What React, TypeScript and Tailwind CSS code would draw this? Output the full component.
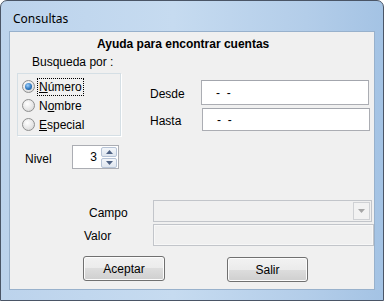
import { ReactNode } from "react";

const font = "font-['Liberation_Sans',Arial,sans-serif]";

const Radio = ({ checked, children }: { checked?: boolean; children: ReactNode }) => (
  <div className="flex h-[19px] items-center pl-[4px]">
    <span className="flex h-[13px] w-[13px] items-center justify-center rounded-full border border-[#8e8f8f] bg-[radial-gradient(circle_at_40%_35%,#ffffff,#e4e4e4_60%,#cfcfcf)]">
      {checked && (
        <span className="h-[7px] w-[7px] rounded-full bg-[radial-gradient(circle_at_40%_35%,#9fd2ff,#2f78bf_55%,#174a80)]" />
      )}
    </span>
    <span className="ml-[4px] text-[12px] leading-[14px] text-black">{children}</span>
  </div>
);

const TextBox = ({ h = "h-[24px]", children }: { h?: string; children?: ReactNode }) => (
  <div
    className={`flex w-[168px] ${h} items-center border border-[#abadb3] border-t-[#a3a6ad] bg-white pl-[14px] text-[12px] text-black`}
  >
    {children}
  </div>
);

const Button = ({ label, w }: { label: string; w: string }) => (
  <div
    className={`flex ${w} h-[25px] items-center justify-center rounded-[3px] border border-[#707070] bg-[linear-gradient(#f2f2f2,#ebebeb_50%,#dddddd_50%,#cfcfcf)] text-[12px] text-black shadow-[inset_0_0_0_1px_#fcfcfc]`}
  >
    {label}
  </div>
);

export default function App() {
  return (
    <div className={`h-[301px] w-[384px] bg-white ${font}`}>
      <div className="flex h-[301px] w-[384px] flex-col overflow-hidden rounded-t-[7px] border border-[#4a5566] bg-[linear-gradient(90deg,#bcd3ec,#c6dbf0_45%,#b3cde9_80%,#a4c3e4)]">
        {/* title bar */}
        <div className="flex h-[30px] shrink-0 items-center pl-[12px] pt-[6px] font-['Noto_Sans',sans-serif] text-[12px] text-black">
          Consultas
        </div>
        <div className="flex flex-1">
          <div className="w-[8px] shrink-0" />
          {/* client */}
          <div className="flex h-[259px] w-[366px] flex-col border border-[#98b1cc] bg-[#f0f0f0] text-[12px] leading-[14px] text-black">
            <div className="mt-[5px] pl-[87px] font-bold">Ayuda para encontrar cuentas</div>

            <div className="flex">
              <div className="flex w-[140px] flex-col pt-[4px]">
                <div className="pl-[22px]">Busqueda por :</div>
                <div className="ml-[7px] mt-[4px] h-[63px] w-[104px] border border-[#d5dfe5] pt-[3px] shadow-[1px_1px_0_#ffffff]">
                  <Radio checked>
                    <span className="outline-1 outline-dotted outline-black outline-offset-[1px]">
                      <span className="underline">N</span>úmero
                    </span>
                  </Radio>
                  <Radio>
                    N<span className="underline">o</span>mbre
                  </Radio>
                  <Radio>
                    <span className="underline">E</span>special
                  </Radio>
                </div>
                <div className="mt-[9px] flex items-center">
                  <span className="w-[62px] pl-[15px] pt-[4px]">Nivel</span>
                  <div className="flex h-[24px] w-[47px] items-center border border-[#abadb3] bg-white">
                    <span className="flex-1 pr-[4px] text-right">3</span>
                    <div className="mr-[1px] flex w-[16px] flex-col gap-[1px]">
                      <div className="flex h-[10px] items-center justify-center rounded-[2px] border border-[#b6c3d6] bg-[linear-gradient(#f3f6fa,#dfe6ef)]">
                        <svg width="7" height="4" viewBox="0 0 7 4">
                          <path d="M0 4 L3.5 0 L7 4 Z" fill="#4e6284" />
                        </svg>
                      </div>
                      <div className="flex h-[10px] items-center justify-center rounded-[2px] border border-[#b6c3d6] bg-[linear-gradient(#f3f6fa,#dfe6ef)]">
                        <svg width="7" height="4" viewBox="0 0 7 4">
                          <path d="M0 0 L3.5 4 L7 0 Z" fill="#4e6284" />
                        </svg>
                      </div>
                    </div>
                  </div>
                </div>
              </div>

              <div className="flex flex-col gap-[3px] pt-[29px]">
                <div className="flex items-center">
                  <span className="w-[51px] pt-[3px]">Desde</span>
                  <TextBox h="h-[25px]">-&nbsp;&nbsp;-</TextBox>
                </div>
                <div className="flex items-center">
                  <span className="w-[52px] pt-[3px]">Hasta</span>
                  <TextBox h="h-[23px]">-&nbsp;&nbsp;-</TextBox>
                </div>
              </div>
            </div>

            <div className="mt-[31px] flex flex-col gap-[2px]">
              <div className="flex items-center">
                <span className="w-[143px] pl-[79px] pt-[4px]">Campo</span>
                <div className="flex h-[22px] w-[219px] justify-end border border-[#c2c5ca] bg-[#f0f0f0]">
                  <div className="m-[1px] flex w-[17px] items-center justify-center border border-[#cfd1d4] bg-[#f2f2f2]">
                    <svg width="7" height="4" viewBox="0 0 7 4">
                      <path d="M0 0 L3.5 4 L7 0 Z" fill="#a6a6a6" />
                    </svg>
                  </div>
                </div>
              </div>
              <div className="flex items-center">
                <span className="w-[143px] pl-[74px] pt-[2px]">Valor</span>
                <div className="h-[22px] w-[221px] border border-[#c2c5ca] bg-[#f0f0f0] shadow-[inset_0_0_0_1px_#f7f7f7]" />
              </div>
            </div>

            <div className="mt-[10px] flex">
              <div className="ml-[73px]">
                <Button label="Aceptar" w="w-[82px]" />
              </div>
              <div className="ml-[62px] mt-[1px]">
                <Button label="Salir" w="w-[81px]" />
              </div>
            </div>
          </div>
          <div className="flex-1" />
        </div>
      </div>
    </div>
  );
}
